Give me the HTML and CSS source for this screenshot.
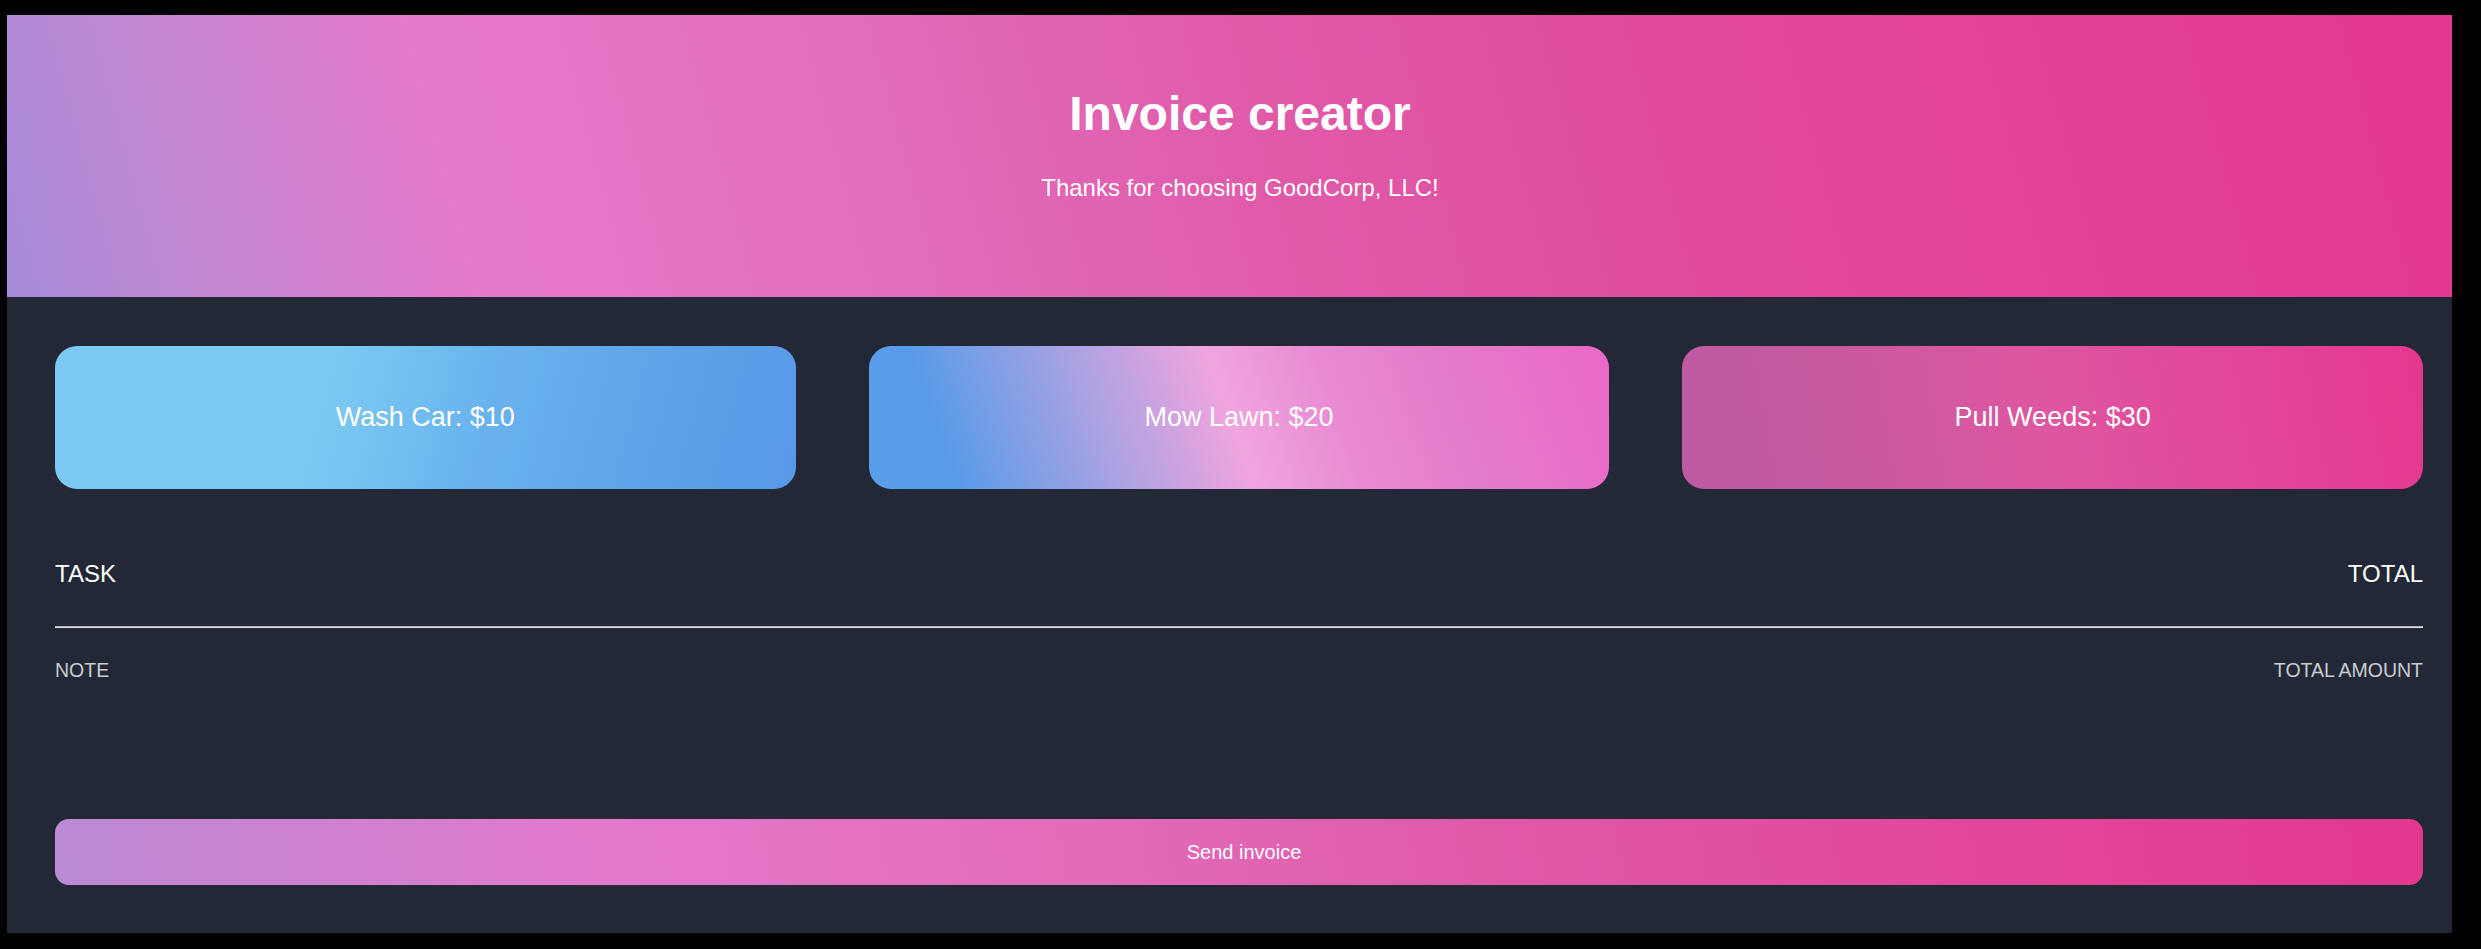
FILE: index.html
```html
<!DOCTYPE html>
<html lang="en">
<head>
<meta charset="utf-8">
<title>Invoice creator</title>
<link rel="stylesheet" href="styles.css">
</head>
<body>
<div class="app">
  <header class="hero">
    <h1 class="hero-title">Invoice creator</h1>
    <p class="hero-sub">Thanks for choosing GoodCorp, LLC!</p>
  </header>
  <main class="content">
    <div class="tasks">
      <button class="task task-wash">Wash Car: $10</button>
      <button class="task task-mow">Mow Lawn: $20</button>
      <button class="task task-weeds">Pull Weeds: $30</button>
    </div>
    <div class="row row-head">
      <span>TASK</span>
      <span>TOTAL</span>
    </div>
    <hr class="divider">
    <div class="row row-foot">
      <span>NOTE</span>
      <span>TOTAL AMOUNT</span>
    </div>
    <button class="send">Send invoice</button>
  </main>
</div>
</body>
</html>
```

FILE: styles.css
```css
html, body {
  margin: 0;
  padding: 0;
  background: #000;
}
body {
  font-family: "Liberation Sans", Arial, sans-serif;
  padding: 15px 29px 16px 7px;
}
.app {
  background: #222835;
  padding-bottom: 48px;
}
.hero {
  box-sizing: border-box;
  height: 282px;
  padding: 71px 0 0 21px;
  text-align: center;
  color: #fff;
  background: linear-gradient(75deg, #a68bd8 0%, #c986d2 10%, #e779cb 19%, #e26ebf 35%, #e05aa8 52%, #e2479b 72%, #e3388f 100%);
}
.hero-title {
  margin: 0;
  font-size: 48px;
  line-height: 56px;
  font-weight: bold;
}
.hero-sub {
  margin: 32px 0 0;
  font-size: 24px;
  line-height: 28px;
}
.content {
  padding: 49px 29px 0 48px;
}
.tasks {
  display: grid;
  grid-template-columns: repeat(3, 1fr);
  column-gap: 73px;
}
.task {
  height: 143px;
  border: none;
  border-radius: 22px;
  color: #fff;
  font-family: "Liberation Sans", Arial, sans-serif;
  font-size: 27px;
  padding: 0;
  cursor: pointer;
}
.task-wash {
  background: linear-gradient(105deg, #7ccaf3 0%, #7ccaf3 36%, #69b2ee 58%, #5ea4ea 78%, #5799e8 100%);
}
.task-mow {
  background: linear-gradient(70deg, #5b9eea 0%, #579be9 11%, #a3a2e3 30%, #f0a4de 49%, #e98ad3 63%, #e57bcb 78%, #ea68c6 100%);
}
.task-weeds {
  background: linear-gradient(80deg, #be5ba2 0%, #c85a9f 22%, #dd57a0 48%, #e2489a 72%, #e5388f 100%);
}
.row {
  display: flex;
  justify-content: space-between;
}
.row-head {
  margin-top: 71px;
  font-size: 24px;
  line-height: 28px;
  color: #fff;
}
.divider {
  margin: 38px 0 0;
  height: 0;
  border: none;
  border-top: 1px solid #aeb2b9;
  border-bottom: 1px solid #dfe1e4;
  border-right: 1px solid #dfe1e4;
}
.row-foot {
  margin-top: 31px;
  font-size: 19.5px;
  line-height: 22px;
  color: #c9ccd2;
}
.send {
  display: block;
  width: 100%;
  height: 66px;
  margin-top: 138px;
  padding: 0 0 0 10px;
  border: none;
  border-radius: 14px;
  color: #fff;
  font-family: "Liberation Sans", Arial, sans-serif;
  font-size: 20px;
  background: linear-gradient(80deg, #bb8ad6 0%, #d081d0 12%, #e678cb 24%, #e26ab8 45%, #e05aa8 60%, #e2479b 80%, #e3388f 100%);
  cursor: pointer;
}
```
